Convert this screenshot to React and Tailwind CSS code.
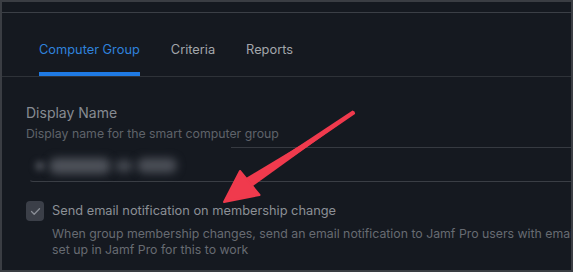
import React from "react";

export default function App() {
  return (
    <div
      className="relative w-[573px] h-[272px] overflow-hidden bg-[#151920] border-t-[2px] border-l-[2px] border-r-[2px] border-b-[2px] border-[#3a3d43]"
      style={{ fontFamily: "Inter, 'Noto Sans', sans-serif" }}
    >
      <div className="h-[11px] border-b border-[#3b3f46]" />
      <div className="flex items-end gap-[31px] pl-[37px] h-[64px] border-b border-[#2e3238]">
        <div className="flex flex-col">
          <span className="text-[12.8px] leading-[20px] text-[#2f82dc]">Computer Group</span>
          <div className="mt-[12px] h-[4px] bg-[#1f7ae3]" />
        </div>
        <div className="flex flex-col">
          <span className="text-[12.8px] leading-[20px] text-[#a3a6ab]">Criteria</span>
          <div className="mt-[12px] h-[4px]" />
        </div>
        <div className="flex flex-col">
          <span className="text-[12.8px] leading-[20px] text-[#a3a6ab]">Reports</span>
          <div className="mt-[12px] h-[4px]" />
        </div>
      </div>

      <div className="pl-[24px] pt-[26px]">
        <div className="text-[14px] leading-[20px] text-[#878b92]">Display Name</div>
        <div className="mt-[1px] text-[12.3px] leading-[20px] text-[#5f636a]">
          Display name for the smart computer group
        </div>
        <div className="relative mt-[3px] ml-[3px] h-[35px]">
          <div className="absolute left-[202px] right-0 top-0 h-px bg-[#363a41]" />
          <div className="absolute left-0 right-0 bottom-0 h-[10px] border-b border-l border-[#3a3e45] rounded-bl-[4px] border-l-transparent" />
          <div className="flex items-center h-full pl-[6px] gap-[4px] pt-[2px]">
            <div className="w-[10px] h-[10px] rounded-full bg-[#474b53] blur-[3px]" />
            <div className="w-[62px] h-[16px] rounded-full bg-[#4d5159] blur-[4px]" />
            <div className="w-[18px] h-[12px] rounded-full bg-[#444850] blur-[4px]" />
            <div className="w-[40px] h-[15px] rounded-full bg-[#4a4e56] blur-[4px]" />
          </div>
        </div>

        <div className="mt-[19px] flex items-start gap-[8px]">
          <div className="w-[18px] h-[20px] rounded-[4px] bg-[#3b3f48] flex items-center justify-center shrink-0">
            <svg width="11" height="9" viewBox="0 0 11 9" fill="none">
              <path d="M1.5 4.5 L4.2 7.2 L9.5 1.8" stroke="#8a8e96" strokeWidth="1.3" strokeLinecap="round" strokeLinejoin="round" />
            </svg>
          </div>
          <div className="flex flex-col">
            <div className="text-[12.8px] leading-[20px] text-[#8c9096] whitespace-nowrap">
              Send email notification on membership change
            </div>
            <div className="mt-[5px] text-[12.3px] leading-[16px] text-[#676b72] whitespace-nowrap">
              When group membership changes, send an email notification to Jamf Pro users with email notifications enabled. An SMTP server must be
            </div>
            <div className="text-[12.3px] leading-[16px] text-[#676b72] whitespace-nowrap">
              set up in Jamf Pro for this to work
            </div>
          </div>
        </div>
      </div>

      <svg
        className="absolute left-0 top-0 pointer-events-none"
        width="573"
        height="272"
        viewBox="0 0 573 272"
      >
        <path
          d="M350.5 108.5 Q353.5 109 353 112 L250 182.5 L247 177 Z"
          fill="#f03a4d"
        />
        <path
          d="M353 110.5 L244 176 L251 184 Z"
          fill="#f03a4d"
        />
        <path
          d="M222 200 L238 169 L257.5 193 Z"
          fill="#f03a4d"
          stroke="#f03a4d"
          strokeWidth="2"
          strokeLinejoin="round"
        />
      </svg>
    </div>
  );
}
